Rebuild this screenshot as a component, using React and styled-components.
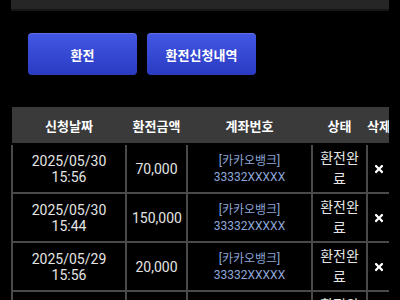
import styled, { createGlobalStyle } from "styled-components";
import { FaTimes } from "react-icons/fa";

const rows = [
  { date: "2025/05/30", time: "15:56", amount: "70,000" },
  { date: "2025/05/30", time: "15:44", amount: "150,000" },
  { date: "2025/05/29", time: "15:56", amount: "20,000" },
  { date: "2025/05/29", time: "15:40", amount: "50,000" },
];

function App() {
  return (
    <>
      <GlobalStyle />
      <Page>
        <TopPanel />
        <ButtonRow>
          <BlueButton>환전</BlueButton>
          <BlueButton>환전신청내역</BlueButton>
        </ButtonRow>
        <TableWrap>
          <Table>
            <colgroup>
              <col style={{ width: 114 }} />
              <col style={{ width: 61 }} />
              <col style={{ width: 125 }} />
              <col style={{ width: 55 }} />
              <col style={{ width: 23 }} />
            </colgroup>
            <thead>
              <tr>
                <Th>신청날짜</Th>
                <Th>환전금액</Th>
                <Th>계좌번호</Th>
                <Th>상태</Th>
                <Th $left>삭제</Th>
              </tr>
            </thead>
            <tbody>
              {rows.map((r, i) => (
                <tr key={i}>
                  <Td>
                    {r.date}
                    <br />
                    {r.time}
                  </Td>
                  <Td>{r.amount}</Td>
                  <Td $account>
                    [카카오뱅크]
                    <br />
                    33332XXXXX
                  </Td>
                  <Td $status>환전완료</Td>
                  <Td $icon>
                    <FaTimes size={12} />
                  </Td>
                </tr>
              ))}
            </tbody>
          </Table>
        </TableWrap>
      </Page>
    </>
  );
}

const GlobalStyle = createGlobalStyle`
  html, body {
    margin: 0;
    background: #000;
    font-family: Roboto, "Noto Sans CJK KR", sans-serif;
  }
`;

const Page = styled.div`
  width: 400px;
  height: 300px;
  overflow: hidden;
  padding: 0 11px;
  box-sizing: border-box;
  background: #000;
`;

const TopPanel = styled.div`
  height: 9px;
  background: #262626;
  border-bottom: 2px solid #161616;
`;

const ButtonRow = styled.div`
  display: flex;
  gap: 10px;
  padding: 22px 0 0 17px;
  height: 42px;
`;

const BlueButton = styled.button`
  width: 109px;
  height: 42px;
  border: 0;
  border-radius: 4px;
  background: linear-gradient(#4257e4, #2a3bc2);
  box-shadow: inset 0 1px 0 rgba(255, 255, 255, 0.15);
  color: #fff;
  font-family: inherit;
  font-weight: 700;
  font-size: 13px;
  padding: 0;
`;

const TableWrap = styled.div`
  margin-top: 32px;
  width: 378px;
  overflow: hidden;
`;

const Table = styled.table`
  width: 378px;
  table-layout: fixed;
  border-collapse: collapse;
`;

const Th = styled.th`
  height: 36px;
  padding: 0;
  background: #3a3a3a;
  color: #fff;
  font-size: 13px;
  font-weight: 700;
  white-space: nowrap;
  text-align: ${(p) => (p.$left ? "left" : "center")};
  border-bottom: 2px solid #000;
`;

const Td = styled.td`
  height: 47px;
  padding: 0 5px;
  border: 2px solid #4a4a4a;
  color: ${(p) => (p.$account ? "#8ea6d8" : "#e4e4e4")};
  font-size: ${(p) => (p.$account ? "12px" : "14px")};
  line-height: ${(p) => (p.$status ? "21px" : "16px")};
  text-align: center;
  ${(p) => p.$icon && "padding: 0; color: #fff; line-height: 0;"}
`;

export default App;
